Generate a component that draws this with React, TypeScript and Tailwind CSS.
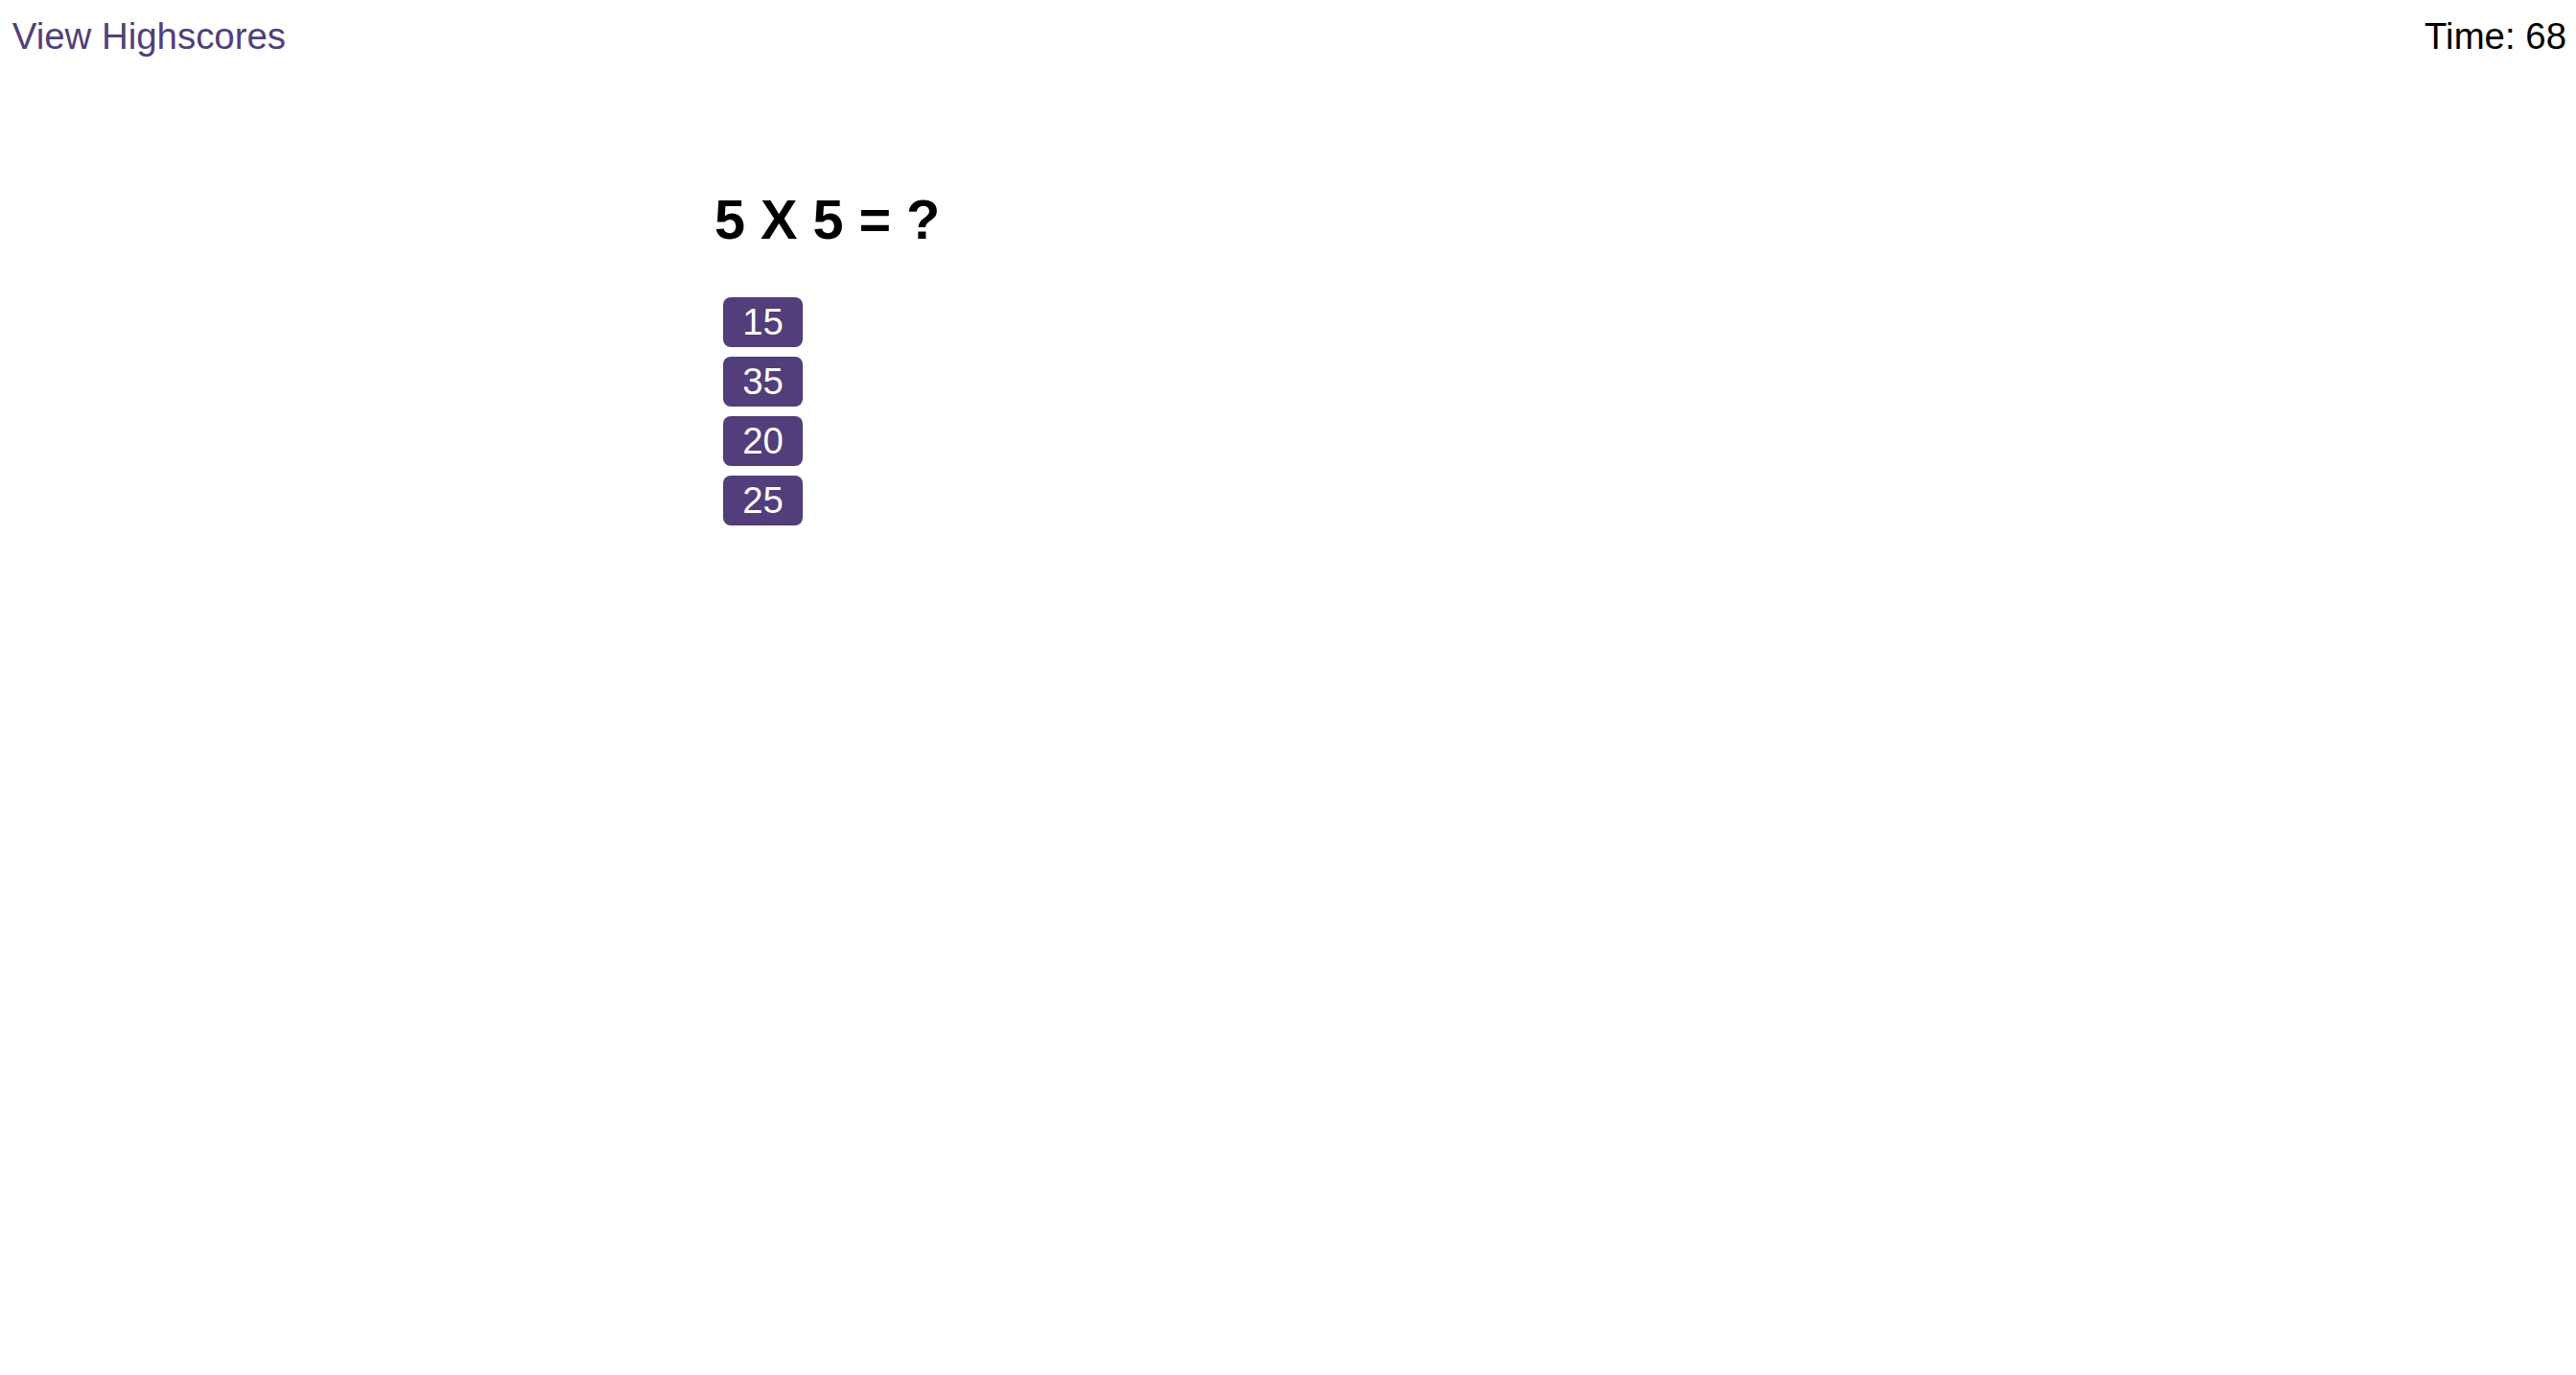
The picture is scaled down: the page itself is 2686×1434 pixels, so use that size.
import React from "react";

export default function App() {
  const answers = ["15", "35", "20", "25"];
  return (
    <div className="min-h-screen w-full bg-white text-black font-['Liberation_Sans',Arial,Helvetica,sans-serif] text-[38.4px]">
      <header className="flex items-start justify-between pl-[12.8px] pr-[10px] pt-[19px]">
        <a href="#" className="leading-none text-[#523e7a] no-underline">
          View Highscores
        </a>
        <div className="leading-none">Time: 68</div>
      </header>
      <main className="pl-[745px] pt-[143.6px]">
        <h2 className="text-[57.6px] font-bold leading-none">5 X 5 = ?</h2>
        <div className="mt-[51.2px] flex flex-col items-start gap-[10px] pl-[9px]">
          {answers.map((a) => (
            <button
              key={a}
              className="flex h-[52px] w-[83px] items-center justify-center rounded-[8px] bg-[#523e7a] text-[38.4px] leading-none text-white"
            >
              {a}
            </button>
          ))}
        </div>
      </main>
    </div>
  );
}
